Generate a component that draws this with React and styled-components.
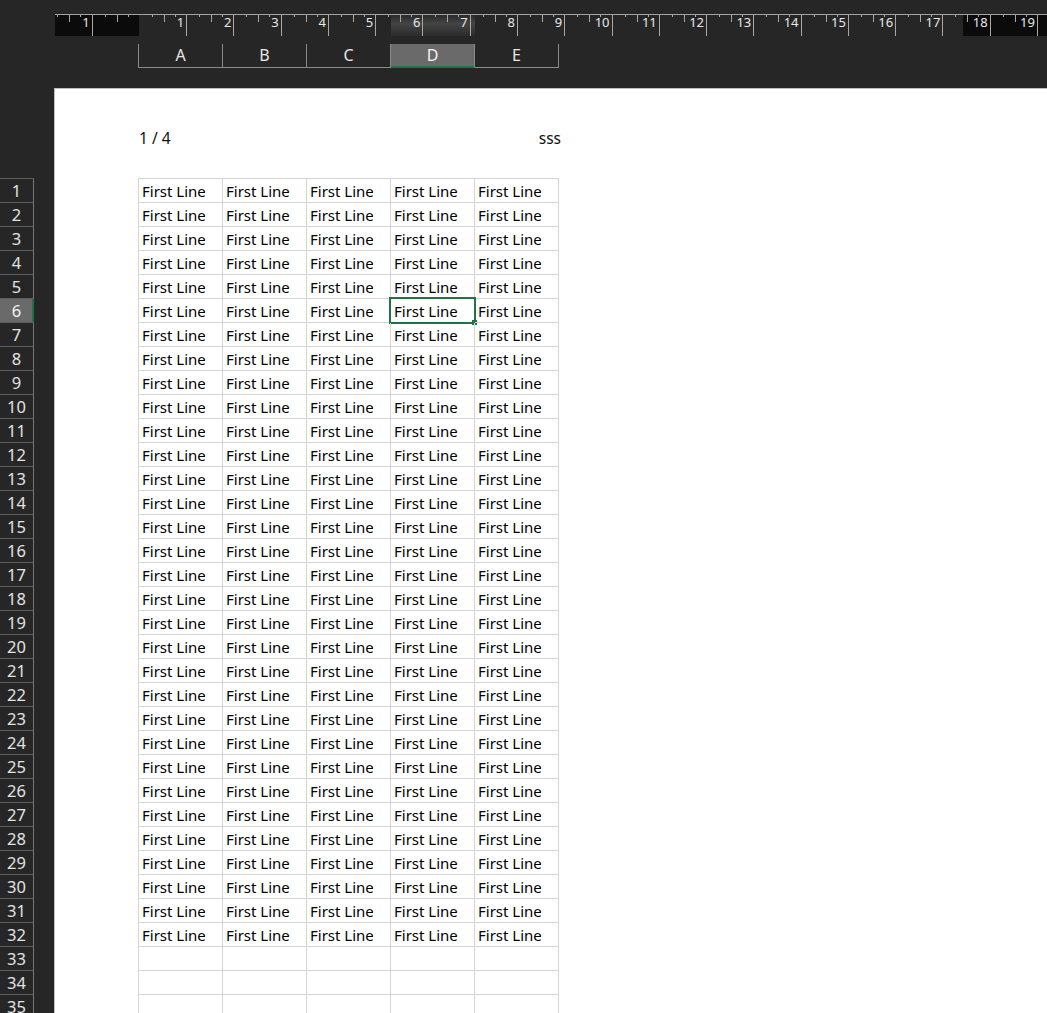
import React from 'react';
import styled, { createGlobalStyle, css } from 'styled-components';

const GlobalStyle = createGlobalStyle`
  html, body {
    margin: 0;
    padding: 0;
    background: #262626;
  }
  body {
    overflow: hidden;
    font-family: "Noto Sans", "Open Sans", sans-serif;
  }
`;

const COLS = ['A', 'B', 'C', 'D', 'E'];
const SELECTED_COL = 3;
const SELECTED_ROW = 6;
const FILLED_ROWS = 32;
const TOTAL_ROWS = 35;
const GREEN = '#217346';

// label of each centimetre cell, the tick sits at its right edge
const rulerCells = ['1', '', ...Array.from({ length: 19 }, (_, i) => String(i + 1)), ''];

const AppFrame = styled.div`
  display: flex;
  flex-direction: column;
  height: 100vh;
`;

const TopBar = styled.div`
  flex: none;
  height: 88px;
  box-sizing: border-box;
  padding: 14px 0 0 55px;
`;

const Ruler = styled.div`
  height: 21px;
  border-top: 1px solid #a3a3a3;
  overflow: hidden;
  background:
    linear-gradient(#0b0b0b, #0b0b0b) 0 0 / 84px 100% no-repeat,
    linear-gradient(#0b0b0b, #0b0b0b) 908px 0 / 84px 100% no-repeat,
    linear-gradient(180deg, #2a2a2a 0%, #444 40%, #2b2b2b 100%) 336px 0 / 84px 100% no-repeat,
    #262626;
`;

const RulerStrip = styled.div`
  display: flex;
  margin-left: -9.7px;
  height: 100%;
`;

const CmCell = styled.div`
  flex: none;
  width: 47.28px;
  height: 100%;
  box-sizing: border-box;
  border-right: 1px solid ${(p) => (p.noTick ? 'transparent' : '#a8a8a8')};
  padding-right: 2px;
  text-align: right;
  font-size: 13px;
  line-height: 14px;
  color: #e8e8e8;
  background-image:
    linear-gradient(#a8a8a8, #a8a8a8),
    linear-gradient(#a8a8a8, #a8a8a8),
    linear-gradient(#a8a8a8, #a8a8a8);
  background-size: 1px 2px, 1px 7px, 1px 2px;
  background-position: 12px 0, 24px 0, 35px 0;
  background-repeat: no-repeat;
`;

const ColumnHeaders = styled.div`
  display: flex;
  margin: 8px 0 0 83px;
  border-left: 1px solid #8a8a8a;
  width: fit-content;
`;

const ColumnHeader = styled.div`
  width: 84px;
  height: 24px;
  box-sizing: border-box;
  border-right: 1px solid #8a8a8a;
  border-bottom: 1px solid #8a8a8a;
  text-align: center;
  font-size: 16px;
  line-height: 23px;
  color: #e6e6e6;
  ${(p) =>
    p.selected &&
    css`
      background: #6a6a6a;
      border-bottom-color: ${GREEN};
      box-shadow: inset 0 -1px 0 ${GREEN};
      color: #f4f4f4;
    `}
`;

const Body = styled.div`
  flex: 1;
  display: flex;
  min-height: 0;
`;

const Side = styled.div`
  flex: none;
  width: 54px;
  padding-top: 90px;
  overflow: hidden;
`;

const RowHeaders = styled.div`
  width: 34px;
  border-top: 1px solid #5c5c5c;
`;

const RowHeader = styled.div`
  height: 24px;
  box-sizing: border-box;
  border-right: 1px solid #777;
  border-bottom: 1px solid #5c5c5c;
  text-align: center;
  font-size: 16.5px;
  line-height: 23px;
  color: #e2e2e2;
  ${(p) =>
    p.selected &&
    css`
      background: #6a6a6a;
      border-right-color: ${GREEN};
      box-shadow: inset -1px 0 0 ${GREEN};
      color: #f4f4f4;
    `}
`;

const Page = styled.div`
  flex: 1;
  background: #fff;
  border-top: 1px solid #bdbdbd;
  border-left: 1px solid #bdbdbd;
  padding-left: 83px;
  overflow: hidden;
`;

const PageHeader = styled.div`
  display: flex;
  justify-content: space-between;
  width: 423px;
  box-sizing: border-box;
  margin-top: 39px;
  padding-left: 1px;
  font-size: 15.5px;
  line-height: 20px;
  color: #111;
`;

const Sheet = styled.div`
  display: grid;
  grid-template-columns: repeat(5, 84px);
  width: fit-content;
  margin-top: 30px;
  border-top: 1px solid #d4d4d4;
  border-left: 1px solid #d4d4d4;
`;

const Cell = styled.div`
  position: relative;
  height: 24px;
  box-sizing: border-box;
  border-right: 1px solid #d4d4d4;
  border-bottom: 1px solid #d4d4d4;
  padding: 1px 0 0 3px;
  font-size: 15px;
  line-height: 23px;
  color: #000;
  white-space: nowrap;
`;

const Selection = styled.div`
  position: absolute;
  left: -2px;
  top: -2px;
  right: -2px;
  bottom: -2px;
  border: 2px solid ${GREEN};
  pointer-events: none;
`;

const FillHandle = styled.div`
  position: absolute;
  right: -3px;
  bottom: -3px;
  width: 5px;
  height: 5px;
  background: ${GREEN};
`;

export default function App() {
  const rows = Array.from({ length: TOTAL_ROWS }, (_, i) => i + 1);
  return (
    <>
      <GlobalStyle />
      <AppFrame>
        <TopBar>
          <Ruler>
            <RulerStrip>
              {rulerCells.map((label, i) => (
                <CmCell key={i} noTick={i === 1}>
                  {label}
                </CmCell>
              ))}
            </RulerStrip>
          </Ruler>
          <ColumnHeaders>
            {COLS.map((c, i) => (
              <ColumnHeader key={c} selected={i === SELECTED_COL}>
                {c}
              </ColumnHeader>
            ))}
          </ColumnHeaders>
        </TopBar>
        <Body>
          <Side>
            <RowHeaders>
              {rows.map((r) => (
                <RowHeader key={r} selected={r === SELECTED_ROW}>
                  {r}
                </RowHeader>
              ))}
            </RowHeaders>
          </Side>
          <Page>
            <PageHeader>
              <span>1 / 4</span>
              <span>sss</span>
            </PageHeader>
            <Sheet>
              {rows.map((r) =>
                COLS.map((c, ci) => (
                  <Cell key={c + r}>
                    {r <= FILLED_ROWS ? 'First Line' : ''}
                    {r === SELECTED_ROW && ci === SELECTED_COL && (
                      <Selection>
                        <FillHandle />
                      </Selection>
                    )}
                  </Cell>
                ))
              )}
            </Sheet>
          </Page>
        </Body>
      </AppFrame>
    </>
  );
}
